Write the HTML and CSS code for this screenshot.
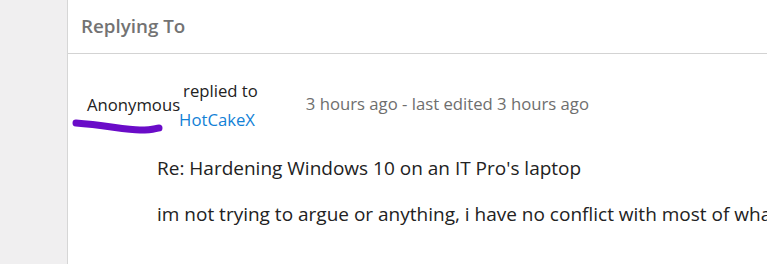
FILE: index.html
```html
<!DOCTYPE html>
<html lang="en">
<head>
    <meta charset="UTF-8">
    <title>Replying To</title>
    <link rel="stylesheet" href="styles.css">
</head>
<body>
    <div class="page">
        <aside class="side"></aside>
        <main class="panel">
            <header class="panel-head">Replying To</header>
            <div class="reply">
                <div class="reply-meta">
                    <span class="author">Anonymous
                        <svg class="scribble" width="95" height="20" viewBox="0 0 95 20">
                            <path d="M6 8 C 35 10, 55 15, 70 15 S 85 13, 89 13" fill="none" stroke="#6a0cc8" stroke-width="7" stroke-linecap="round"/>
                        </svg>
                    </span>
                    <span class="replied">
                        <span class="replied-label">replied to</span>
                        <a href="#" class="replied-user">HotCakeX</a>
                    </span>
                    <span class="time">3 hours ago - last edited 3 hours ago</span>
                </div>
                <div class="reply-body">
                    <h3 class="reply-title">Re: Hardening Windows 10 on an IT Pro's laptop</h3>
                    <p class="reply-text">im not trying to argue or anything, i have no conflict with most of what you wrote</p>
                </div>
            </div>
        </main>
    </div>
</body>
</html>
```

FILE: styles.css
```css
body, html {
    margin: 0;
    padding: 0;
    height: 100%;
    font-family: 'Open Sans', sans-serif;
    background: #fff;
    overflow: hidden;
}

.page {
    display: flex;
    height: 100%;
}

/* 左のグレー領域 */
.side {
    width: 67px;
    flex-shrink: 0;
    background: #f0eff0;
    border-right: 1px solid #d6d6d6;
}

.panel {
    flex: 1;
    min-width: 0;
    overflow: hidden;
}

.panel-head {
    height: 54px;
    box-sizing: border-box;
    padding-left: 13px;
    line-height: 53px;
    font-size: 18.8px;
    font-weight: 600;
    color: #737373;
    border-bottom: 1px solid #d3d3d3;
}

.reply {
    padding: 22px 0 0 19px;
}

.reply-meta {
    display: flex;
    align-items: center;
    white-space: nowrap;
    font-size: 16.7px;
}

.author {
    position: relative;
    line-height: 20px;
    color: #222;
}

.scribble {
    position: absolute;
    left: -17px;
    top: 20px;
}

.replied {
    display: flex;
    flex-direction: column;
    line-height: 29px;
    margin-left: -1px;
}

.replied-label {
    color: #222;
    margin-left: 4px;
}

.replied-user {
    color: #1281d6;
    text-decoration: none;
}

.time {
    color: #6e6e6e;
    margin-left: 48px;
    margin-bottom: 3px;
}

.reply-body {
    padding-left: 70px;
    margin-top: 21px;
}

.reply-title {
    margin: 0;
    font-size: 19px;
    line-height: 26px;
    font-weight: 400;
    color: #222;
}

.reply-text {
    margin: 20px 0 0;
    font-size: 19px;
    line-height: 26px;
    color: #222;
    white-space: nowrap;
}
```
